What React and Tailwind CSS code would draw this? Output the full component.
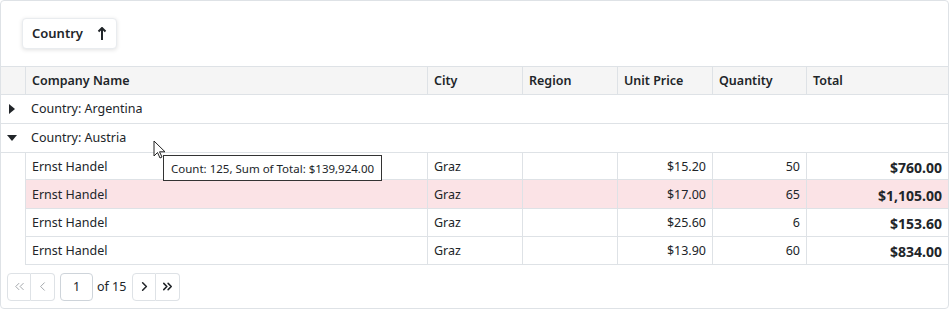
import React from 'react';
import { ChevronsLeft, ChevronLeft, ChevronRight, ChevronsRight } from 'lucide-react';

const cols = [
  { key: 'company', label: 'Company Name', w: 'w-[402px]', align: 'text-left' },
  { key: 'city', label: 'City', w: 'w-[95px]', align: 'text-left' },
  { key: 'region', label: 'Region', w: 'w-[95px]', align: 'text-left' },
  { key: 'price', label: 'Unit Price', w: 'w-[95px]', align: 'text-right' },
  { key: 'qty', label: 'Quantity', w: 'w-[94px]', align: 'text-right' },
  { key: 'total', label: 'Total', w: 'flex-1', align: 'text-right' },
];

const rows = [
  { company: 'Ernst Handel', city: 'Graz', region: '', price: '$15.20', qty: '50', total: '$760.00' },
  { company: 'Ernst Handel', city: 'Graz', region: '', price: '$17.00', qty: '65', total: '$1,105.00', hl: true },
  { company: 'Ernst Handel', city: 'Graz', region: '', price: '$25.60', qty: '6', total: '$153.60' },
  { company: 'Ernst Handel', city: 'Graz', region: '', price: '$13.90', qty: '60', total: '$834.00' },
];

function Caret({ down }) {
  return down ? (
    <svg width="10" height="6" viewBox="0 0 10 6"><path d="M0 0h10L5 6z" fill="#212529" /></svg>
  ) : (
    <svg width="6" height="10" viewBox="0 0 6 10"><path d="M0 0v10l6-5z" fill="#212529" /></svg>
  );
}

function PagerBtn({ children, dim, left }) {
  return (
    <div
      className={`w-6 h-7 flex items-center justify-center border border-[#dee2e6] bg-white ${
        left ? 'rounded-l' : 'rounded-r border-l-0'
      } ${dim ? 'text-[#8a8f95]' : 'text-[#212529]'}`}
    >
      {children}
    </div>
  );
}

export default function App() {
  return (
    <div className="w-[950px] h-[309px] bg-white" style={{ fontFamily: '"Noto Sans", sans-serif' }}>
      <div className="relative w-[949px] h-[309px] border border-[#dee2e6] rounded-sm text-[12.5px] text-[#212529] flex flex-col overflow-hidden">
        {/* group panel */}
        <div className="h-[65px] pl-[21px] pt-[17px]">
          <div className="inline-flex items-center gap-[14px] h-[31px] px-[9px] pt-[1px] bg-white border border-[#e9ecef] rounded shadow-[0_1px_4px_rgba(0,0,0,0.12)] font-semibold text-[13px]">
            <span>Country</span>
            <svg width="10" height="14" viewBox="0 0 10 14">
              <path d="M5 1v12M1.5 4.5L5 1l3.5 3.5" stroke="#212529" strokeWidth="2" fill="none" />
            </svg>
          </div>
        </div>

        {/* header */}
        <div className="flex h-[29px] bg-[#f5f5f5] border-t border-b border-[#dee2e6] font-semibold">
          <div className="w-[25px] border-r border-[#dee2e6]" />
          {cols.map((c) => (
            <div key={c.key} className={`${c.w} px-[6px] pt-[2px] flex items-center border-r border-[#dee2e6] last:border-r-0`}>
              {c.label}
            </div>
          ))}
        </div>

        {/* groups */}
        <div className="flex items-center h-[29px] border-b border-[#dee2e6]">
          <div className="w-[25px] flex items-center justify-center pr-[3px]"><Caret /></div>
          <span className="pl-[5px] pt-[2px]">Country: Argentina</span>
        </div>
        <div className="flex items-center h-[29px] border-b border-[#dee2e6]">
          <div className="w-[25px] flex items-center justify-center pr-[3px]"><Caret down /></div>
          <span className="pl-[5px] pt-[2px]">Country: Austria</span>
        </div>

        {/* data */}
        {rows.map((r, i) => (
          <div key={i} className={`flex ${i === 1 ? 'h-[29px]' : 'h-[28px]'}`}>
            <div className="w-[25px] border-r border-[#dee2e6]" />
            <div className={`flex flex-1 border-b border-[#dee2e6] ${r.hl ? 'bg-[#fbe3e6]' : ''}`}>
              {cols.map((c) => (
                <div
                  key={c.key}
                  className={`${c.w} px-[6px] pt-[2px] flex items-center border-r border-[#dee2e6] last:border-r-0 ${
                    c.align === 'text-right' ? 'justify-end' : ''
                  } ${c.key === 'total' ? 'font-bold text-[14px]' : ''}`}
                >
                  {r[c.key]}
                </div>
              ))}
            </div>
          </div>
        ))}

        {/* pager */}
        <div className="flex items-center h-[43px] pl-[6px]">
          <PagerBtn dim left><ChevronsLeft size={15} strokeWidth={1.25} /></PagerBtn>
          <PagerBtn dim><ChevronLeft size={15} strokeWidth={1.25} /></PagerBtn>
          <div className="ml-[5px] w-[33px] h-7 pt-[1px] border border-[#ced4da] rounded flex items-center justify-center">1</div>
          <span className="ml-[4px] mr-[6px] pt-[1px]">of 15</span>
          <PagerBtn left><ChevronRight size={15} strokeWidth={2.5} /></PagerBtn>
          <PagerBtn><ChevronsRight size={15} strokeWidth={2.5} /></PagerBtn>
        </div>

        {/* tooltip */}
        <div className="absolute left-[162px] top-[154px] h-[26px] px-[7px] pt-[1px] flex items-center bg-white border border-[#333] text-[11.5px] whitespace-nowrap">
          Count: 125, Sum of Total: $139,924.00
        </div>

        {/* cursor */}
        <svg className="absolute left-[152px] top-[139px]" width="13" height="19" viewBox="0 0 13 19">
          <path d="M1 1v15l3.5-3.5 2.5 5.5 2-1-2.5-5.2H12z" fill="white" stroke="#222" strokeWidth="1" strokeLinejoin="round" />
        </svg>
      </div>
    </div>
  );
}
